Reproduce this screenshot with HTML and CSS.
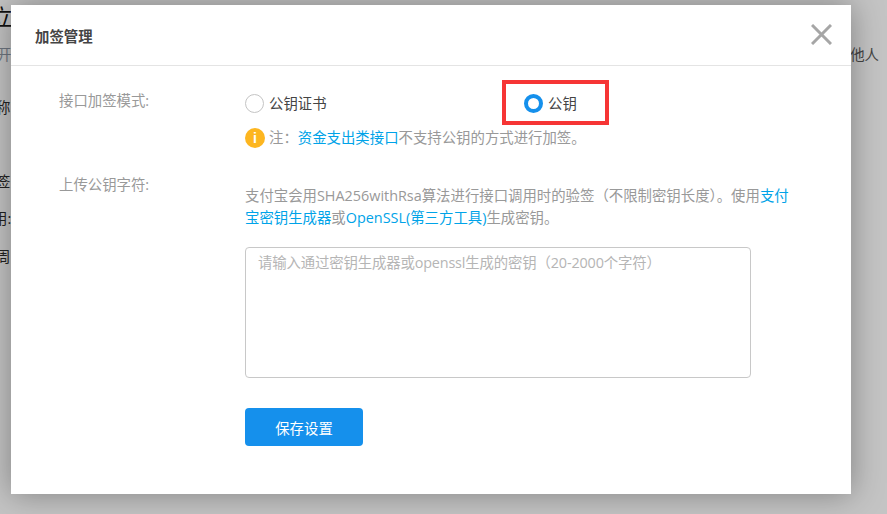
FILE: index.html
```html
<!DOCTYPE html>
<html lang="zh-CN">
<head>
<meta charset="utf-8">
<title>加签管理</title>
<link rel="stylesheet" href="styles.css">
</head>
<body>
<div class="page">
  <div class="bg-title">立</div>
  <div class="bg-row"><span class="faint">开</span><span>他人</span></div>
  <div class="bg-line name">称</div>
  <div class="bg-line sign">签</div>
  <div class="bg-line use">用:</div>
  <div class="bg-line week">周</div>
</div>
<div class="modal">
  <header class="modal-head">
    <h1 class="modal-title">加签管理</h1>
    <svg class="close" width="21" height="21" viewBox="0 0 21 21" aria-label="关闭"><path d="M1 1 20 20M20 1 1 20" fill="none" stroke="#a6a6a6" stroke-width="3"/></svg>
  </header>
  <div class="modal-body">
    <div class="field mode">
      <div class="label">接口加签模式:</div>
      <div class="content">
        <div class="radios">
          <label class="radio first"><span class="dot"></span>公钥证书</label>
          <label class="radio second"><span class="dot on"></span>公钥</label>
        </div>
        <p class="note"><span class="info">i</span>注：<a class="link">资金支出类接口</a>不支持公钥的方式进行加签。</p>
      </div>
    </div>
    <div class="field upload">
      <div class="label">上传公钥字符:</div>
      <div class="content">
        <p class="desc">支付宝会用SHA256withRsa算法进行接口调用时的验签（不限制密钥长度）。使用<a class="link">支付宝密钥生成器</a>或<a class="link">OpenSSL(第三方工具)</a>生成密钥。</p>
        <textarea class="keybox" placeholder="请输入通过密钥生成器或openssl生成的密钥（20-2000个字符）"></textarea>
        <button class="save" type="button">保存设置</button>
      </div>
    </div>
  </div>
</div>
<div class="highlight"></div>
</body>
</html>
```
FILE: styles.css
```css
* { box-sizing: border-box; }
html, body { margin: 0; height: 100%; }
body {
  position: relative;
  width: 887px;
  height: 514px;
  overflow: hidden;
  background: #c4c4c4;
  font-family: "Open Sans", "Noto Sans CJK SC", "Liberation Sans", sans-serif;
  font-size: 14.4px;
  color: #333;
}
.page { padding-top: 4px; margin-left: -4px; color: #333; }
.bg-title { font-size: 22px; line-height: 24px; color: #111; margin-left: -5px; }
.bg-row { display: flex; justify-content: space-between; width: 882px; margin-top: 16px; line-height: 22px; color: #444; margin-left: 1px; }
.faint { color: #6f7680; }
.bg-line { line-height: 20px; color: #222; margin-left: 0; }
.name { margin-top: 32px; }
.sign { margin-top: 54px; }
.use { margin-top: 17px; margin-left: -3px; }
.week { margin-top: 18px; }

.modal {
  position: absolute;
  left: 11px;
  top: 5px;
  width: 840px;
  height: 489px;
  background: #fff;
  box-shadow: 0 0 30px rgba(0, 0, 0, .35);
}
.modal-head {
  display: flex;
  align-items: center;
  justify-content: space-between;
  height: 61px;
  padding: 0 19px 0 24px;
  border-bottom: 1px solid #e4e4e4;
}
.modal-title { margin: 0; font-size: 14.4px; font-weight: 700; color: #444; line-height: 20px; padding-top: 4px; }
.close { display: block; margin-top: -2px; }
.modal-body { padding: 24px 0 0 48px; }
.field { display: flex; }
.label { width: 186px; color: #999; line-height: 22px; flex: none; }
.content { width: 548px; }
.radios { display: flex; height: 26px; align-items: center; padding-top: 1px; }
.radio { display: flex; align-items: center; color: #444; line-height: 20px; }
.first { width: 279px; }
.dot { width: 19px; height: 19px; margin-right: 5px; border: 1px solid #c4c4c4; border-radius: 50%; background: #fff; }
.dot.on { border: 4px solid #1590ec; }
.note { display: flex; align-items: center; margin: 11px 0 0; height: 22px; color: #999; line-height: 22px; }
.info {
  width: 20px; height: 20px; margin-right: 4px;
  border-radius: 50%;
  background: #fdb620;
  color: #fff;
  font: 700 14px/20px "Liberation Sans", sans-serif;
  text-align: center;
}
.link { color: #00a3e8; }
.upload { margin-top: 23px; }
.upload .label { padding-top: 2px; }
.desc { margin: 13px 0 0; color: #999; line-height: 22px; }
.keybox {
  display: block;
  width: 506px;
  height: 131px;
  margin-top: 18px;
  padding: 4px 12px;
  border: 1px solid #c8c8c8;
  border-radius: 4px;
  background: #fff;
  font: inherit;
  line-height: 22px;
  resize: none;
  outline: none;
}
.keybox::placeholder { color: #b5b5b5; opacity: 1; letter-spacing: -.15px; }
.save {
  display: block;
  width: 118px;
  height: 38px;
  margin-top: 30px;
  border: 0;
  border-radius: 4px;
  background: #1590ec;
  color: #fff;
  font: inherit;
}
.highlight {
  position: absolute;
  left: 502px;
  top: 80px;
  width: 107px;
  height: 45px;
  border: 4px solid #f63535;
}
```
